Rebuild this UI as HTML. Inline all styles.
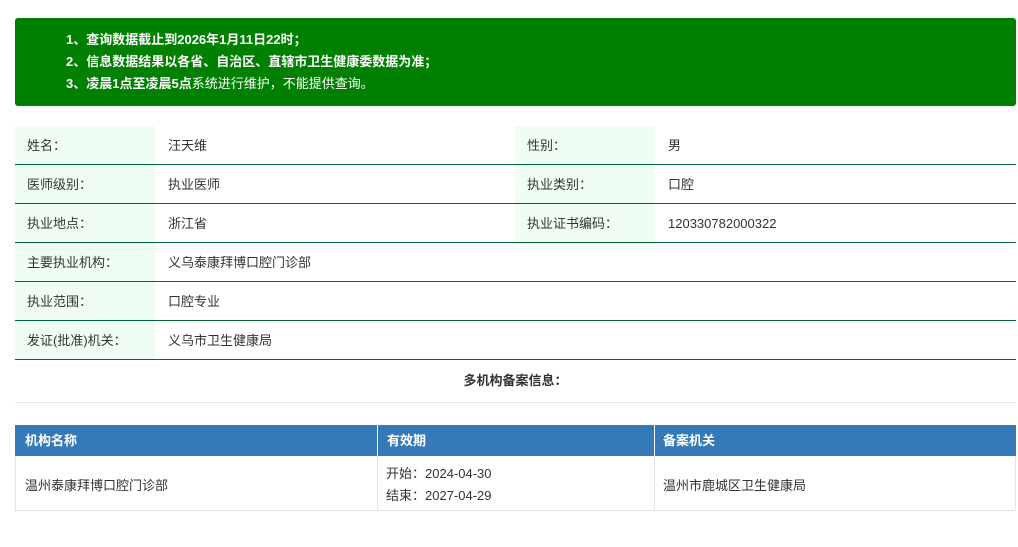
<!DOCTYPE html><html><head><meta charset="utf-8"><style>
body{margin:0;background:#fff;font-family:"Liberation Sans","Noto Sans CJK SC",sans-serif;font-size:13px;color:#333;width:1018px;height:547px;overflow:hidden;position:relative}
.note{position:absolute;left:15px;top:18px;width:1001px;height:88px;background:#008000;border-radius:3px;color:#fff;font-weight:bold}
.note div{position:absolute;left:51px;line-height:22px}
.row{position:absolute;left:15px;width:1001px;height:38px;border-bottom:1px solid #006633}
.c{position:absolute;top:0;height:38px;line-height:40px}
.lab{background:#f0fdf5;width:128px;padding-left:12px}
.t{position:absolute;left:15px;width:1001px}
</style></head><body>
<div class="note"><div style="top:11px">1、查询数据截止到2026年1月11日22时；</div><div style="top:33px">2、信息数据结果以各省、自治区、直辖市卫生健康委数据为准；</div><div style="top:55px">3、凌晨1点至凌晨5点<span style="font-weight:normal">系统进行维护，不能提供查询。</span></div></div>
<div class="row" style="top:126px"><div class="c lab" style="left:0">姓名：</div><div class="c" style="left:153px">汪天维</div><div class="c lab" style="left:500px">性别：</div><div class="c" style="left:653px">男</div></div>
<div class="row" style="top:165px"><div class="c lab" style="left:0">医师级别：</div><div class="c" style="left:153px">执业医师</div><div class="c lab" style="left:500px">执业类别：</div><div class="c" style="left:653px">口腔</div></div>
<div class="row" style="top:204px"><div class="c lab" style="left:0">执业地点：</div><div class="c" style="left:153px">浙江省</div><div class="c lab" style="left:500px">执业证书编码：</div><div class="c" style="left:653px">120330782000322</div></div>
<div class="row" style="top:243px"><div class="c lab" style="left:0">主要执业机构：</div><div class="c" style="left:153px">义乌泰康拜博口腔门诊部</div></div>
<div class="row" style="top:282px"><div class="c lab" style="left:0">执业范围：</div><div class="c" style="left:153px">口腔专业</div></div>
<div class="row" style="top:321px"><div class="c lab" style="left:0">发证(批准)机关：</div><div class="c" style="left:153px">义乌市卫生健康局</div></div>
<div class="t" style="top:370px;height:32px;line-height:22px;text-align:center;font-weight:bold;border-bottom:1px solid #e8e8e8">多机构备案信息：</div>
<div class="t" style="top:425px;height:31px;background:#337ab7;color:#fff;font-weight:bold;line-height:31px">
<span style="position:absolute;left:10px">机构名称</span><span style="position:absolute;left:362px;top:0;height:31px;border-left:1px solid #fff"></span><span style="position:absolute;left:372px">有效期</span><span style="position:absolute;left:639px;top:0;height:31px;border-left:1px solid #fff"></span><span style="position:absolute;left:648px">备案机关</span></div>
<div class="t" style="top:456px;height:55px;border:1px solid #e3e3e3;border-top:none;box-sizing:border-box;width:1001px">
<span style="position:absolute;left:9px;top:19px">温州泰康拜博口腔门诊部</span><span style="position:absolute;left:361px;top:0;height:55px;border-left:1px solid #e3e3e3"></span><span style="position:absolute;left:370px;top:7px;line-height:22px">开始：2024-04-30<br>结束：2027-04-29</span><span style="position:absolute;left:638px;top:0;height:55px;border-left:1px solid #e3e3e3"></span><span style="position:absolute;left:647px;top:19px">温州市鹿城区卫生健康局</span></div>
</body></html>
